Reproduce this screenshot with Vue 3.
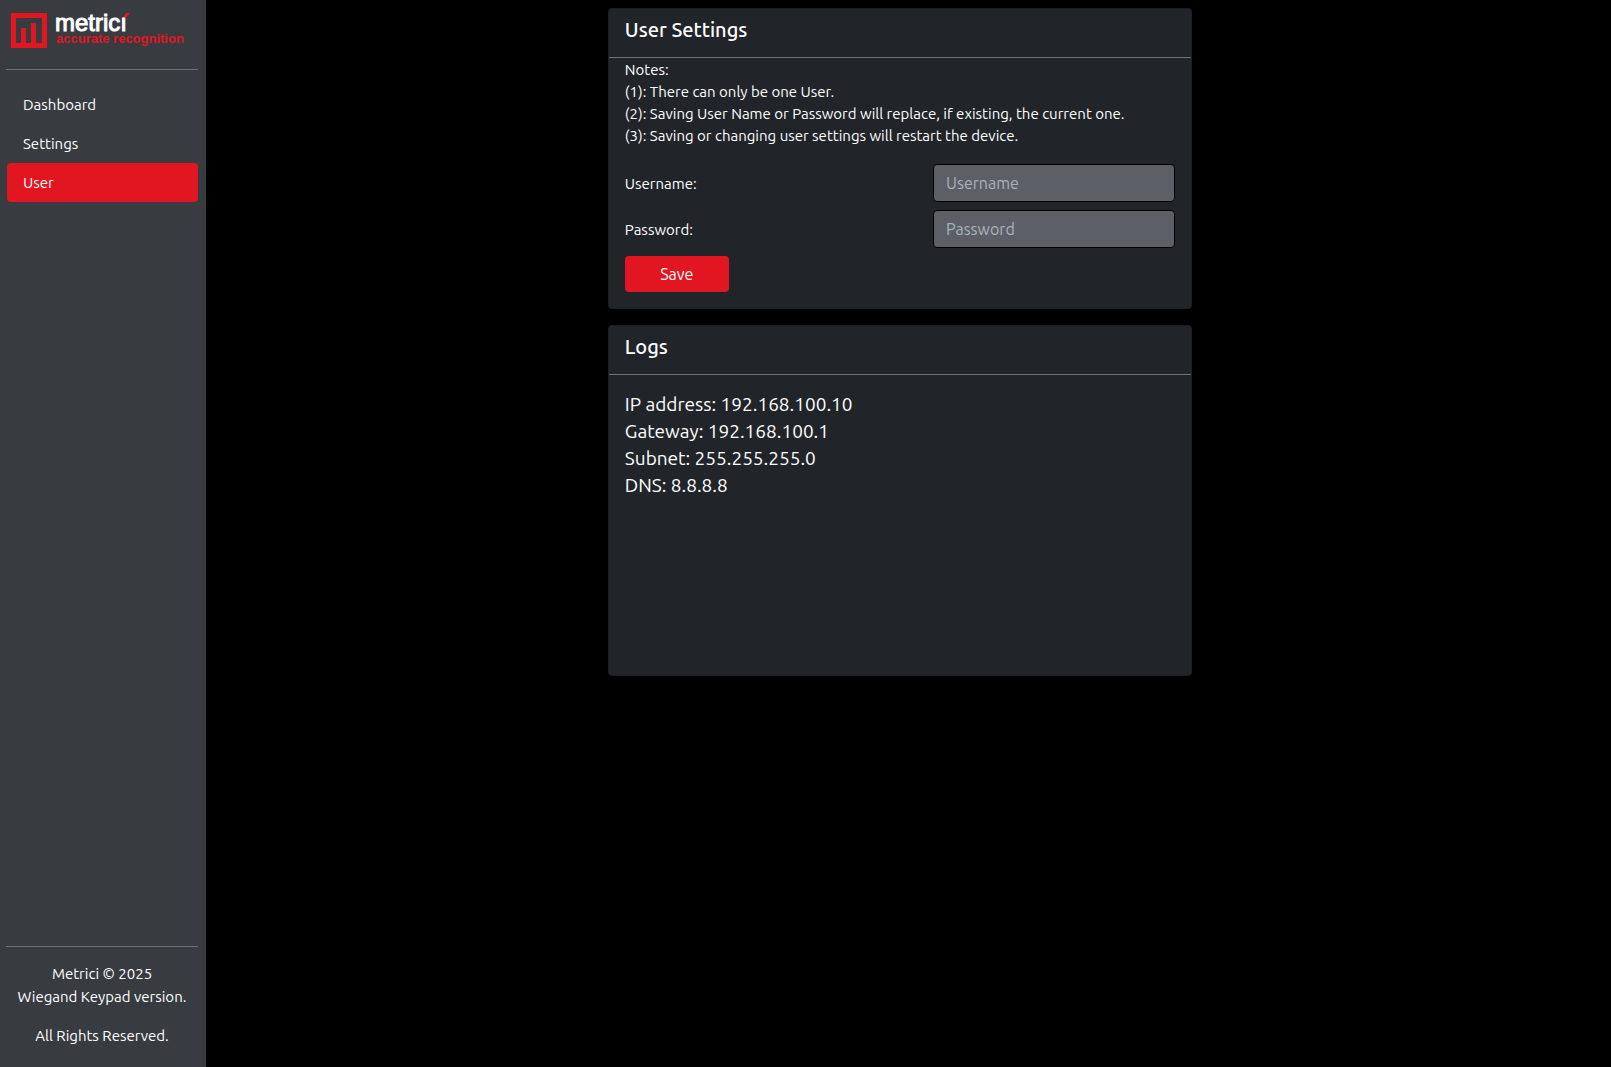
<script setup>
import { ref } from 'vue'

const links = ['Dashboard', 'Settings', 'User']
const active = ref('User')
const username = ref('')
const password = ref('')
const logs = [
  'IP address: 192.168.100.10',
  'Gateway: 192.168.100.1',
  'Subnet: 255.255.255.0',
  'DNS: 8.8.8.8',
]
</script>

<template>
  <div class="layout">
    <aside class="sidebar">
      <a class="brand" href="#" aria-label="Metrici home">
        <svg width="180" height="52" viewBox="0 -8 180 52">
          <path fill="#e11621" fill-rule="evenodd" d="M0 1h36v35H0z M5 6v25h5V16h5v15h5V11h5v20h6V6z" />
          <text class="wordmark" x="44" y="19">metricı</text>
          <path fill="#e11621" d="M115 1h4l-3 4h-4z" />
          <text class="tagline" x="45" y="31">accurate recognition</text>
        </svg>
      </a>
      <nav class="nav">
        <a
          v-for="link in links"
          :key="link"
          href="#"
          class="nav-link"
          :class="{ active: link === active }"
          @click.prevent="active = link"
        >{{ link }}</a>
      </nav>
      <footer class="footer">
        <p>Metrici © 2025<br />Wiegand Keypad version.</p>
        <p>All Rights Reserved.</p>
      </footer>
    </aside>

    <main class="main">
      <section class="card">
        <h1 class="card-title">User Settings</h1>
        <form class="settings" @submit.prevent>
          <p class="notes">
            Notes:<br />
            (1): There can only be one User.<br />
            (2): Saving User Name or Password will replace, if existing, the current one.<br />
            (3): Saving or changing user settings will restart the device.
          </p>
          <div class="field">
            <label for="username">Username:</label>
            <input id="username" v-model="username" type="text" placeholder="Username" />
          </div>
          <div class="field">
            <label for="password">Password:</label>
            <input id="password" v-model="password" type="password" placeholder="Password" />
          </div>
          <button class="save" type="submit">Save</button>
        </form>
      </section>

      <section class="card">
        <h2 class="card-title">Logs</h2>
        <div class="logs">
          <div v-for="line in logs" :key="line">{{ line }}</div>
        </div>
      </section>
    </main>
  </div>
</template>

<style>
body {
  background: #000;
}
</style>

<style scoped>
.layout {
  display: flex;
  min-height: 100vh;
  color: #fff;
  background: #000;
  font-family: Ubuntu, "Noto Sans", sans-serif;
  font-size: 15px;
  line-height: 23px;
}

.layout * {
  box-sizing: border-box;
}

.sidebar {
  display: flex;
  flex-direction: column;
  flex: 0 0 206px;
  padding: 0 8px 0 6px;
  background: #383b40;
}

.brand {
  display: block;
  height: 70px;
  padding: 4px 0 0 5px;
  border-bottom: 1px solid #6b6e72;
}

.brand svg {
  display: block;
}

.wordmark {
  fill: #fff;
  stroke: #fff;
  stroke-width: 1px;
  font: 24px "Liberation Sans", sans-serif;
}

.tagline {
  fill: #e11621;
  font: bold 13px "Liberation Sans", sans-serif;
}

.nav {
  display: flex;
  flex-direction: column;
  padding: 15px 0 0 1px;
}

.nav-link {
  padding: 0 16px;
  border-radius: 4px;
  color: #fff;
  line-height: 39px;
  text-decoration: none;
}

.nav-link.active {
  background: #e11621;
}

.footer {
  margin-top: auto;
  padding: 15px 0 4px;
  border-top: 1px solid #6b6e72;
  text-align: center;
}

.footer p {
  margin: 0 0 16px;
}

.main {
  display: flex;
  flex: 1;
  flex-direction: column;
  align-items: center;
  gap: 16px;
  padding: 8px 17px 16px 0;
}

.card {
  width: 42.1%;
  border: 1px solid #1c1f22;
  border-radius: 4px;
  background: #212529;
}

.card-title {
  margin: 0;
  padding: 9px 16px 15px;
  border-bottom: 1px solid #6c757d;
  font-size: 20px;
  font-weight: 500;
  line-height: 24px;
}

.settings {
  padding: 1px 16px 16px;
}

.notes {
  margin: 0 0 17px;
  line-height: 22px;
}

.field {
  display: flex;
  align-items: center;
  justify-content: space-between;
  margin-bottom: 8px;
}

.field input {
  width: 44%;
  height: 38px;
  padding: 0 12px;
  border: 1px solid #000;
  border-radius: 4px;
  color: #fff;
  background: #5c6066;
  font: inherit;
  font-size: 16px;
}

.field input::placeholder {
  color: #a9b1b9;
  opacity: 1;
}

.save {
  width: 104px;
  height: 36px;
  border: 0;
  border-radius: 4px;
  color: #fff;
  background: #e11621;
  font: inherit;
  font-size: 16px;
}

.logs {
  min-height: 300px;
  padding: 16px;
  font-size: 19px;
  line-height: 27px;
}
</style>
